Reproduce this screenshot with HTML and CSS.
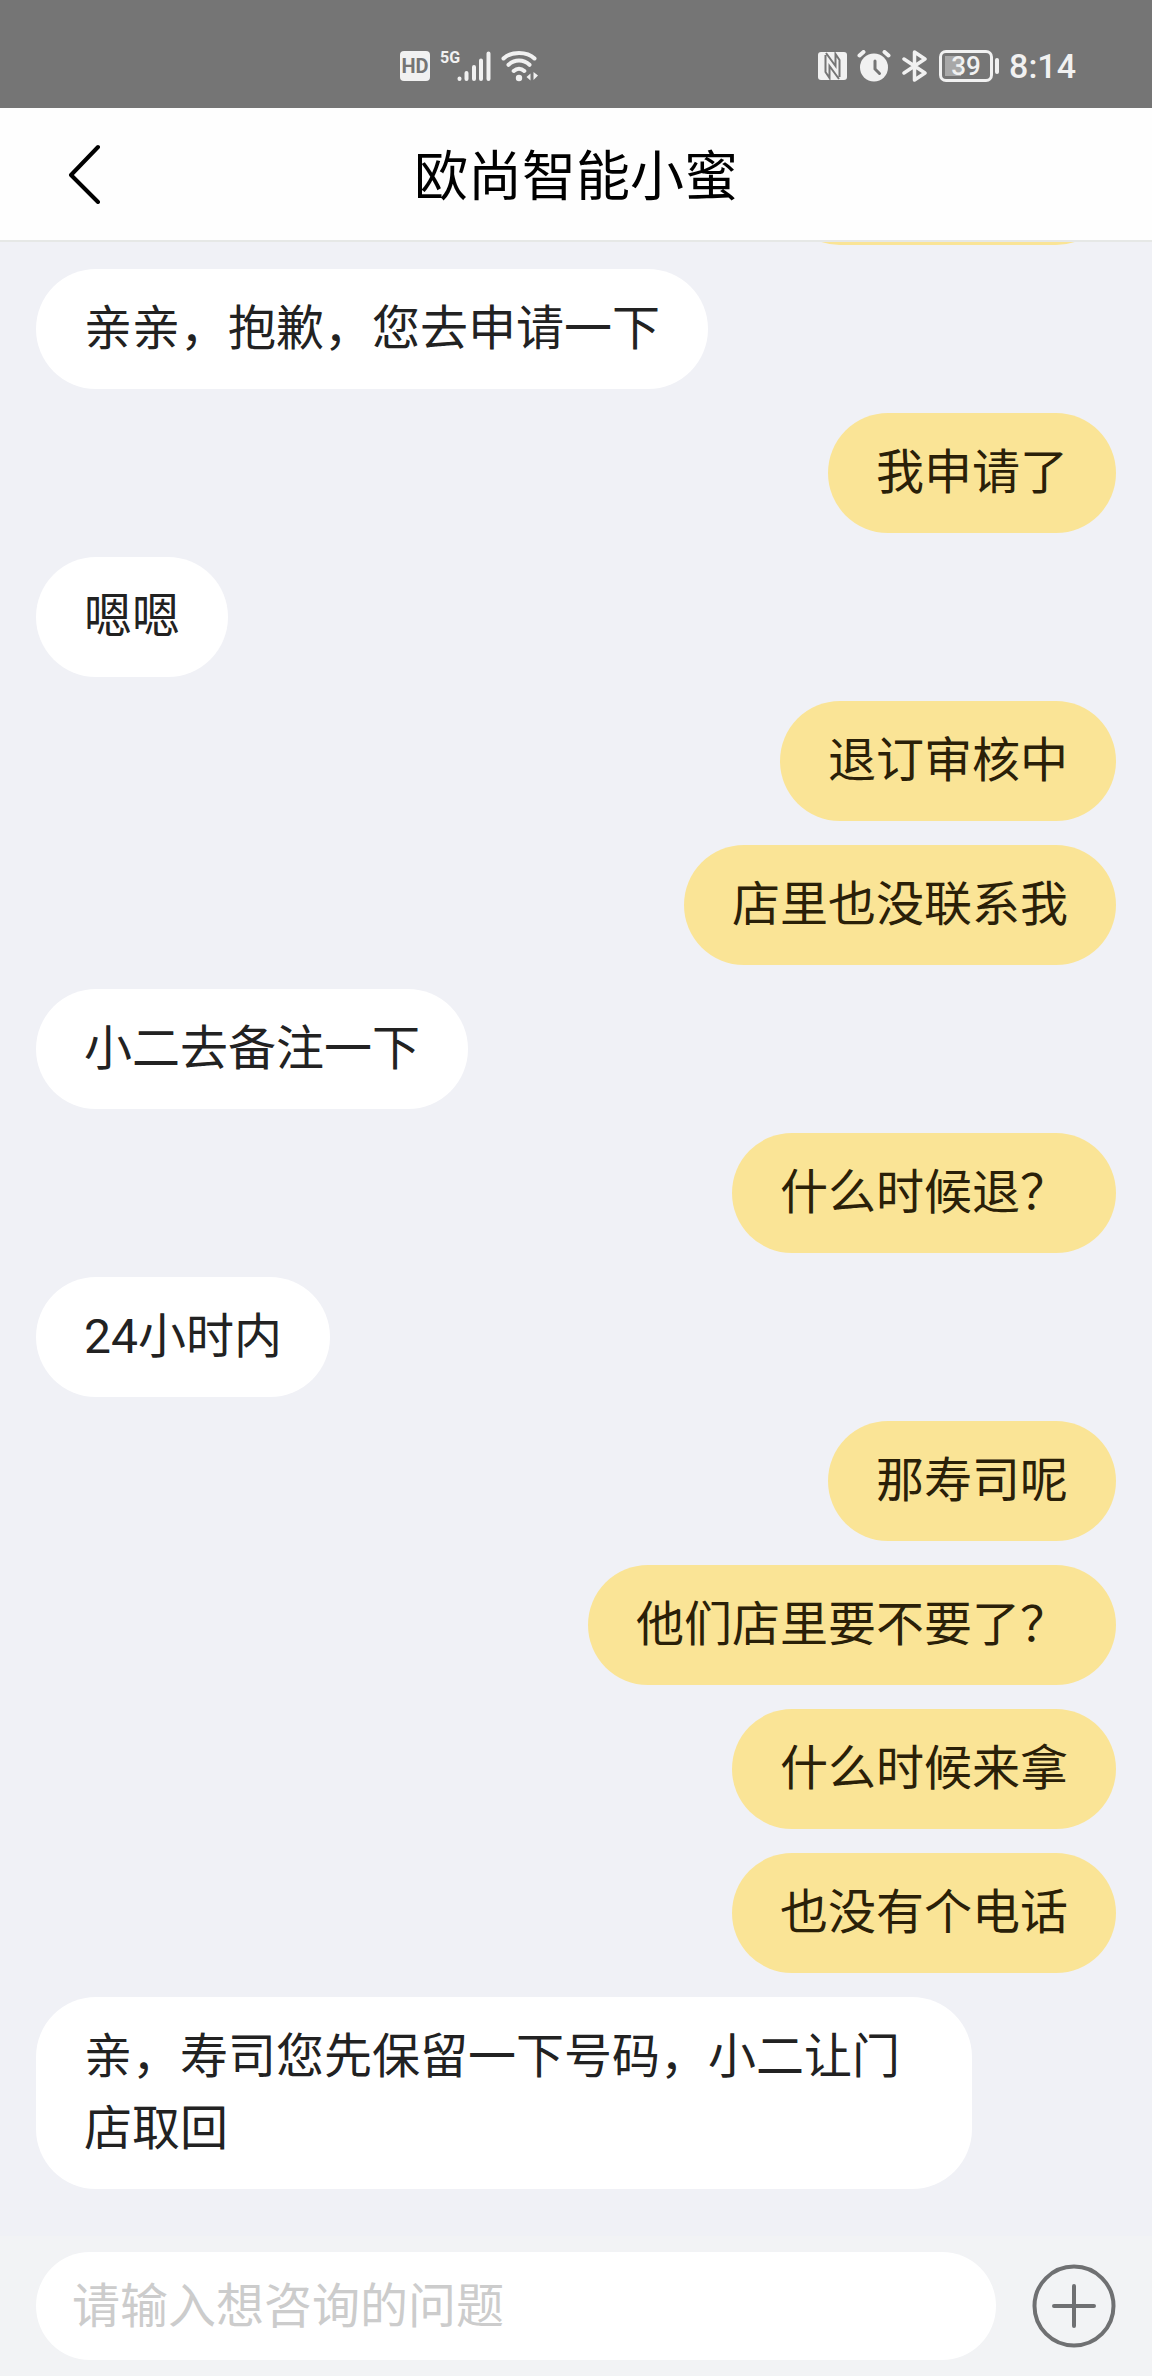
FILE: index.html
```html
<!DOCTYPE html>
<html lang="zh-CN">
<head>
  <meta charset="utf-8">
  <meta name="viewport" content="width=device-width, initial-scale=1">
  <title>欧尚智能小蜜</title>
  <link rel="stylesheet" href="styles.css">
</head>
<body>
  <div class="status-bar">
    <div class="status-group">
      <span class="hd-badge">HD</span>
      <span class="signal">
        <span class="signal-type">5G</span>
        <svg width="34" height="32" viewBox="0 0 34 32" fill="none" stroke="currentColor" stroke-width="4" stroke-linecap="round"><path d="M2.5 28.500v.5M9.500 23v6M17 17v12M24 10.500v18.500M31.500 3.500v25.500"/></svg>
      </span>
      <svg width="38" height="32" viewBox="0 0 38 32" fill="none" stroke="currentColor" stroke-width="4" stroke-linecap="round"><path d="M2.500 8.500C10 1 26 1 33.500 8.500M7.500 14.800c6-5.600 15-5.600 21 0M12.700 21c3.300-3 7.300-3 10.600 0"/><circle cx="18" cy="28" r="3.200" fill="currentColor" stroke="none"/><path d="M29.500 23.500v7l-4-3.500zM32.500 22v8l4.500-4.500z" fill="currentColor" stroke="none"/></svg>
    </div>
    <div class="status-group">
      <svg width="29" height="32" viewBox="0 0 29 32"><rect y="2" width="29" height="28" rx="3" fill="currentColor"/><path d="M8 2l12 15V9l2-4v24l-12-13v8l-2 4z" fill="currentColor"/><path d="M7.500 5v17l4 6v-12l9.500 13M21.500 27V10l-4-6v12L8 3" fill="none" stroke="#757575" stroke-width="2"/></svg>
      <svg width="34" height="32" viewBox="0 0 34 32" fill="none" stroke="currentColor" stroke-linecap="round"><circle cx="17" cy="17.500" r="14" fill="currentColor" stroke="none"/><path d="M2.500 5.500l4-3.500M31.500 5.500l-4-3.500" stroke-width="4"/><path d="M18 11v8l4.500 4.500" stroke="#757575" stroke-width="3"/></svg>
      <svg width="28" height="32" viewBox="0 0 28 32" fill="none" stroke="currentColor" stroke-width="3.500" stroke-linecap="round" stroke-linejoin="round"><path d="M3 9l21 14-10.500 7V2L24 9 3 23"/></svg>
      <span class="battery"><span class="battery-body">39</span><span class="battery-tip"></span></span>
      <span class="clock">8:14</span>
    </div>
  </div>

  <header class="title-bar">
    <button class="back" type="button" aria-label="返回">
      <svg width="36" height="60" viewBox="0 0 36 60" fill="none" stroke="currentColor" stroke-width="4" stroke-linecap="round" stroke-linejoin="round"><path d="M32 3L5 31l27 27"/></svg>
    </button>
    <h1 class="title">欧尚智能小蜜</h1>
  </header>

  <main class="chat">
    <div class="messages">
      <p class="bubble sent previous" aria-hidden="true"></p>
      <p class="bubble">亲亲，抱歉，您去申请一下</p>
      <p class="bubble sent">我申请了</p>
      <p class="bubble">嗯嗯</p>
      <p class="bubble sent">退订审核中</p>
      <p class="bubble sent">店里也没联系我</p>
      <p class="bubble">小二去备注一下</p>
      <p class="bubble sent">什么时候退？</p>
      <p class="bubble">24小时内</p>
      <p class="bubble sent">那寿司呢</p>
      <p class="bubble sent">他们店里要不要了？</p>
      <p class="bubble sent">什么时候来拿</p>
      <p class="bubble sent">也没有个电话</p>
      <p class="bubble">亲，寿司您先保留一下号码，小二让门店取回</p>
    </div>
  </main>

  <form class="composer">
    <input class="composer-input" type="text" placeholder="请输入想咨询的问题" aria-label="请输入想咨询的问题">
    <button class="add" type="button" aria-label="更多">
      <svg width="84" height="84" viewBox="0 0 84 84" fill="none" stroke="currentColor" stroke-width="4" stroke-linecap="round"><circle cx="42" cy="42" r="39.500"/><path d="M42 22v40M22 42h40"/></svg>
    </button>
  </form>
</body>
</html>
```

FILE: styles.css
```css
* {
  box-sizing: border-box;
}

body {
  display: flex;
  flex-direction: column;
  min-height: 100vh;
  margin: 0;
  background: #f0f1f6;
  color: #222;
  font-family: Roboto, "Noto Sans CJK SC", sans-serif;
  font-size: 48px;
  line-height: 72px;
}

svg {
  display: block;
  flex: none;
}

button {
  padding: 0;
  border: 0;
  background: none;
  color: inherit;
}

/* Phone status bar */
.status-bar {
  display: flex;
  justify-content: space-between;
  padding: 50px 76px 26px 400px;
  background: #757575;
  color: #f1f1f1;
}

.status-group {
  display: flex;
  align-items: center;
  gap: 10px;
  height: 32px;
}

.hd-badge {
  width: 30px;
  height: 30px;
  border-radius: 4px;
  background: #f1f1f1;
  color: #757575;
  font-size: 20px;
  font-weight: 700;
  line-height: 30px;
  text-align: center;
}

.signal {
  display: flex;
  align-items: flex-start;
}

.signal-type {
  width: 17px;
  font-size: 16px;
  font-weight: 700;
  line-height: 16px;
}

.battery {
  display: flex;
  align-items: center;
  gap: 2px;
}

.battery-body {
  width: 54px;
  height: 32px;
  border: 3px solid #f1f1f1;
  border-radius: 7px;
  background: linear-gradient(90deg, #a8a8a8 16px, transparent 16px) 3px 3px / 42px 20px no-repeat;
  font-size: 26px;
  font-weight: 500;
  line-height: 26px;
  text-align: center;
}

.battery-tip {
  width: 4px;
  height: 16px;
  border-radius: 2px;
  background: #f1f1f1;
}

.clock {
  font-size: 34px;
  font-weight: 500;
  line-height: 32px;
}

/* Title bar */
.title-bar {
  display: grid;
  grid-template-columns: 1fr auto 1fr;
  align-items: center;
  padding: 26px 66px;
  border-bottom: 2px solid #e6e8e6;
  background: #fefefe;
  color: #000;
}

.back {
  justify-self: start;
}

.title {
  margin: 0;
  padding-top: 8px;
  font-size: 54px;
  font-weight: 400;
  line-height: 72px;
}

/* Conversation */
.chat {
  flex: 1;
  overflow: hidden;
}

.messages {
  display: flex;
  flex-direction: column;
  align-items: flex-start;
  gap: 24px;
  margin-top: -117px;
  padding: 0 36px 36px;
}

.bubble {
  max-width: calc(100% - 144px);
  margin: 0;
  padding: 24px 48px;
  border-radius: 60px;
  background: #fff;
}

.sent {
  align-self: flex-end;
  background: #fae496;
  color: #2a2008;
}

.previous {
  width: 336px;
  height: 120px;
}

/* Message entry */
.composer {
  display: flex;
  align-items: center;
  gap: 36px;
  padding: 16px 36px;
  background: #f2f3f5;
}

.composer-input {
  flex: 1;
  min-width: 0;
  height: 108px;
  padding: 0 36px;
  border: 0;
  border-radius: 54px;
  background: #fff;
  color: #222;
  font: inherit;
}

.composer-input::placeholder {
  color: #ccc;
}

.add {
  color: #6f7072;
}
```
